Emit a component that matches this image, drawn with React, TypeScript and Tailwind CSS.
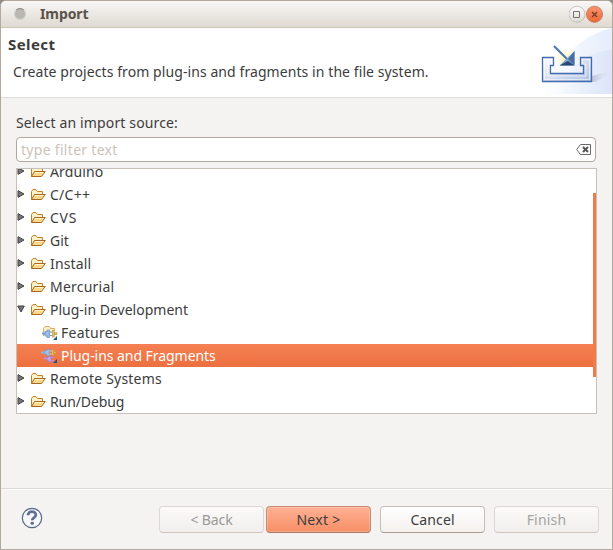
import React from "react";

function Folder() {
  return (
    <svg width="16" height="16" viewBox="0 0 16 16" className="block shrink-0">
      <path d="M1.5 12.5V4.5L3 2.5H6L7.5 4.5H12.5V7" fill="#fdf0c4" stroke="#b9812f" />
      <path d="M1.5 12.5L4.5 7.5H15.3L11.5 12.5Z" fill="#fbd98c" stroke="#a8661f" />
      <path d="M5 8.5H13.2" stroke="#fff3d0" />
    </svg>
  );
}

function Arrow({ open }: { open?: boolean }) {
  return (
    <svg width="8" height="8" viewBox="0 0 8 8" className="block shrink-0">
      <path d={open ? "M.7 1H7.3L4 7Z" : "M1 .7V7.3L7 4Z"} fill="#777" stroke="#414141" strokeWidth="1" />
    </svg>
  );
}

function FeatureIcon() {
  return (
    <svg width="17" height="16" viewBox="0 0 17 16" className="block shrink-0">
      <path d="M2.5 11V3.5L4 1.5H8L9.5 3.5H13.5V6" fill="#fdeec4" stroke="#d3ac5c" />
      <path d="M1 8.5H4" stroke="#77a2d8" strokeWidth="2" />
      <path d="M4 6.5H6V5H8.5V12.5H6V11H4Z" fill="#98bdea" stroke="#5f8cc8" strokeWidth=".7" />
      <path d="M9 7H11.5M9 10.5H11.5" stroke="#7b9fcb" />
      <path d="M11.5 5.5H13.2V12H11.5ZM13.2 7.7H16V9.5H13.2Z" fill="#ebcb67" stroke="#b78e2c" strokeWidth=".6" />
      <path d="M16 11V15H12Z" fill="#17548c" />
    </svg>
  );
}

function PluginIcon() {
  return (
    <svg width="17" height="16" viewBox="0 0 17 16" className="block shrink-0">
      <path d="M0 4.5H4" stroke="#8bb9e8" strokeWidth="2" />
      <path d="M4 2.5H6V1.2H8.2V8H6V6.5H4Z" fill="#9cc4ee" stroke="#6d9acd" strokeWidth=".6" />
      <path d="M8.5 3H11M8.5 6H11" stroke="#cfdce8" />
      <path d="M11 1.5H12.7V7.5H11ZM12.7 3.6H15V5.4H12.7Z" fill="#f0d272" stroke="#b8923a" strokeWidth=".6" />
      <path d="M3 10.5H6" stroke="#c08fe0" strokeWidth="2" />
      <path d="M6 9.2H7.5V8.2H10V14H7.5V12.4H6Z" fill="#cda6ea" stroke="#9a70c7" strokeWidth=".6" />
      <path d="M10 9.5H13.5M10 12.5H12.5" stroke="#b88be0" strokeWidth="1.2" />
      <path d="M16 11V15H12Z" fill="#17548c" />
    </svg>
  );
}

const rows = [
  { t: "Arduino", c: "tracking-[0.12px]" },
  { t: "C/C++", c: "tracking-[0.25px]" },
  { t: "CVS", c: "tracking-[0.7px]" },
  { t: "Git", c: "tracking-[0px]" },
  { t: "Install", c: "tracking-[0.15px]" },
  { t: "Mercurial", c: "tracking-[0.22px]" },
  { t: "Plug-in Development", c: "tracking-[0px]", open: true },
  { t: "Features", c: "tracking-[0.25px]", kind: "feature" },
  { t: "Plug-ins and Fragments", c: "tracking-[-0.05px]", kind: "plugin" },
  { t: "Remote Systems", c: "tracking-[0.2px]" },
  { t: "Run/Debug", c: "tracking-[-0.1px]" },
];

export default function App() {
  return (
    <div className="h-[550px] w-[613px] bg-[#8f8a85] font-['Noto_Sans','Open_Sans',sans-serif] text-[14px] leading-[20px] text-[#3c3c3c]">
      <div className="flex h-full flex-col overflow-hidden rounded-t-[6px] border border-[#b3a89e] bg-[#f4f3f1]">
        <header className="flex h-[27px] shrink-0 items-center border-b border-[#cfc5bb] bg-linear-to-b from-[#f8f7f5] to-[#dfd9d2] pl-[13px] pr-[9px]">
          <span className="h-3 w-3 rounded-full border border-[#d2cfcb] border-t-[#85817d] bg-[#bab7b3]" />
          <span className="ml-[14px] font-bold tracking-[-0.1px] text-[#5b524b]">Import</span>
          <svg width="34" height="18" viewBox="0 0 34 18" className="ml-auto">
            <defs>
              <linearGradient id="close" x2="0" y2="1"><stop stopColor="#f99471" /><stop offset="1" stopColor="#ef6634" /></linearGradient>
              <linearGradient id="max" x2="0" y2="1"><stop stopColor="#fff" /><stop offset="1" stopColor="#dedad5" /></linearGradient>
            </defs>
            <circle cx="8" cy="9.3" r="8" fill="url(#max)" stroke="#bdb7b0" strokeWidth=".8" />
            <path d="M4.5 6.5H10.5V12.5H4.5Z" fill="none" stroke="#77716b" />
            <circle cx="25.5" cy="9.3" r="8.1" fill="url(#close)" stroke="#ba7d63" strokeWidth=".8" />
            <path d="M23 7L28 12M28 7L23 12" stroke="#753c24" strokeWidth="1.4" />
          </svg>
        </header>
        <section className="flex h-[70px] shrink-0 justify-between border-b border-[#dfdcd8] bg-white">
          <div className="pl-[7px] pt-[6px]">
            <h1 className="text-[15px] font-bold leading-5 tracking-[0.4px]">Select</h1>
            <p className="mt-[8px] whitespace-nowrap pl-[5px] tracking-[0.08px]">Create projects from plug-ins and fragments in the file system.</p>
          </div>
          <svg width="75" height="66" viewBox="0 0 75 66" className="shrink-0">
            <defs>
              <linearGradient id="sky" x1="0" x2="1"><stop stopColor="#fff" /><stop offset="1" stopColor="#e5edfb" /></linearGradient>
              <linearGradient id="haze" x1="0" x2="1"><stop stopColor="#dfe8f9" stopOpacity="0" /><stop offset="1" stopColor="#d6e0f6" /></linearGradient>
              <linearGradient id="tray" x2="1" y2="1"><stop stopColor="#fff" /><stop offset="1" stopColor="#aebfe4" /></linearGradient>
              <linearGradient id="shade" x1="0" x2="1"><stop stopColor="#b4b2cc" /><stop offset="1" stopColor="#d8dff2" stopOpacity="0" /></linearGradient>
              <radialGradient id="glow"><stop stopColor="#fff6bc" /><stop offset="1" stopColor="#fff6bc" stopOpacity="0" /></radialGradient>
            </defs>
            <path d="M75 0C48 6 28 27 12 45L4 66H75Z" fill="url(#sky)" />
            <path d="M75 22C50 23 31 39 20 66H75Z" fill="url(#haze)" opacity=".6" />
            <circle cx="28" cy="30" r="10" fill="url(#glow)" />
            <path d="M55 48L70 44L73 46L58 54H55Z" fill="url(#shade)" opacity=".7" />
            <path d="M5.5 29.5H16.5V37.5H13.5V45.5H46.5V37.5H43.5V29.5H54.5V53.5H5.5Z" fill="url(#tray)" stroke="#426dac" strokeWidth="1.3" />
            <path d="M7.5 31.5H14.5V36H11V48H49V36H45.5V31.5H52.5V51.5H7.5Z" fill="none" stroke="#fff" strokeOpacity=".55" />
            <path d="M17 18L30 31" stroke="#4d78b0" strokeWidth="2.2" />
            <path d="M37.5 23V37.5H22.5Z" fill="#7ea3cb" />
            <path d="M37.5 23V37.5L31 31Z" fill="#486fa4" />
            <path d="M37.5 37.5H22.5L31 33Z" fill="#244679" />
          </svg>
        </section>
        <main className="flex flex-1 flex-col px-[15px] pt-[15px]">
          <label className="block h-[24px] leading-[20px] tracking-[0.14px]">Select an import source:</label>
          <div className="flex h-[25px] w-[580px] items-center justify-between rounded-[4px] border border-[#b3a89f] bg-white pl-[4px] pr-[4px] text-[#cdc3bb]">
            <span className="tracking-[0.3px]">type filter text</span>
            <svg width="15" height="11" viewBox="0 0 15 11">
              <path d="M4.5.5H14.5V10.5H4.5L.7 5.5Z" fill="#fff" stroke="#696969" />
              <path d="M7 3L12 8M12 3L7 8" stroke="#555" strokeWidth="2" />
            </svg>
          </div>
          <div className="relative mt-[6px] h-[246px] w-[581px] overflow-hidden border border-[#c6c0b8] bg-white">
            <div className="-mt-[9px]">
              {rows.map((r) => (
                <div key={r.t} className={"flex h-[23px] items-center " + (r.kind === "plugin" ? "bg-linear-to-b from-[#f58053] to-[#ec703f] text-white" : "")}>
                  {r.kind ? <span className="w-[24px]" /> : <span className="mb-[2px] w-[13px]"><Arrow open={r.open} /></span>}
                  {r.kind === "feature" ? <FeatureIcon /> : r.kind === "plugin" ? <PluginIcon /> : <Folder />}
                  <span className={(r.kind ? "ml-[3px]" : "ml-1") + " whitespace-nowrap " + r.c}>{r.t}</span>
                </div>
              ))}
            </div>
            <div className="absolute right-0 top-6 h-[184px] w-[3px] bg-[#f37b4b]" />
          </div>
        </main>
        <footer className="flex h-[61px] shrink-0 items-start border-t border-[#dcdad7] pl-5 pr-[13px] pt-[17px] shadow-[inset_0_1px_#fbfbfa]">
          <svg width="22" height="22" viewBox="0 0 22 22" className="mt-[1px]">
            <circle cx="11" cy="11" r="9.7" fill="#f8f8fa" stroke="#576b8f" strokeWidth="1.2" />
            <path d="M7 8.2C7 3.4 15 3.6 14.8 8C14.7 10.6 11.3 10.5 11.3 13.3" fill="none" stroke="#5d7196" strokeWidth="2.8" />
            <circle cx="11.2" cy="16.3" r="1.7" fill="#5d7196" />
          </svg>
          <button className="ml-auto h-[27px] w-[105px] rounded-[4px] border border-[#ddd8d3] border-b-[#cfc5bd] bg-linear-to-b from-[#fbfaf9] to-[#f1efed] tracking-[-0.1px] text-[#999]">&lt; Back</button>
          <button className="ml-[2px] h-[27px] w-[105px] rounded-[4px] border border-[#c58a73] border-b-[#a87765] bg-linear-to-b from-[#ffb194] to-[#f68e65] tracking-[0.3px] shadow-[inset_0_0_0_1px_#ffffff38]">Next &gt;</button>
          <button className="ml-[9px] h-[27px] w-[105px] rounded-[4px] border border-[#c6bfb8] border-b-[#a89c92] bg-linear-to-b from-white to-[#f4f1ee] tracking-[0.1px]">Cancel</button>
          <button className="ml-[9px] h-[27px] w-[105px] rounded-[4px] border border-[#ddd8d3] border-b-[#cfc5bd] bg-linear-to-b from-[#fbfaf9] to-[#f1efed] tracking-[0.2px] text-[#a3a3a3]">Finish</button>
        </footer>
      </div>
    </div>
  );
}
